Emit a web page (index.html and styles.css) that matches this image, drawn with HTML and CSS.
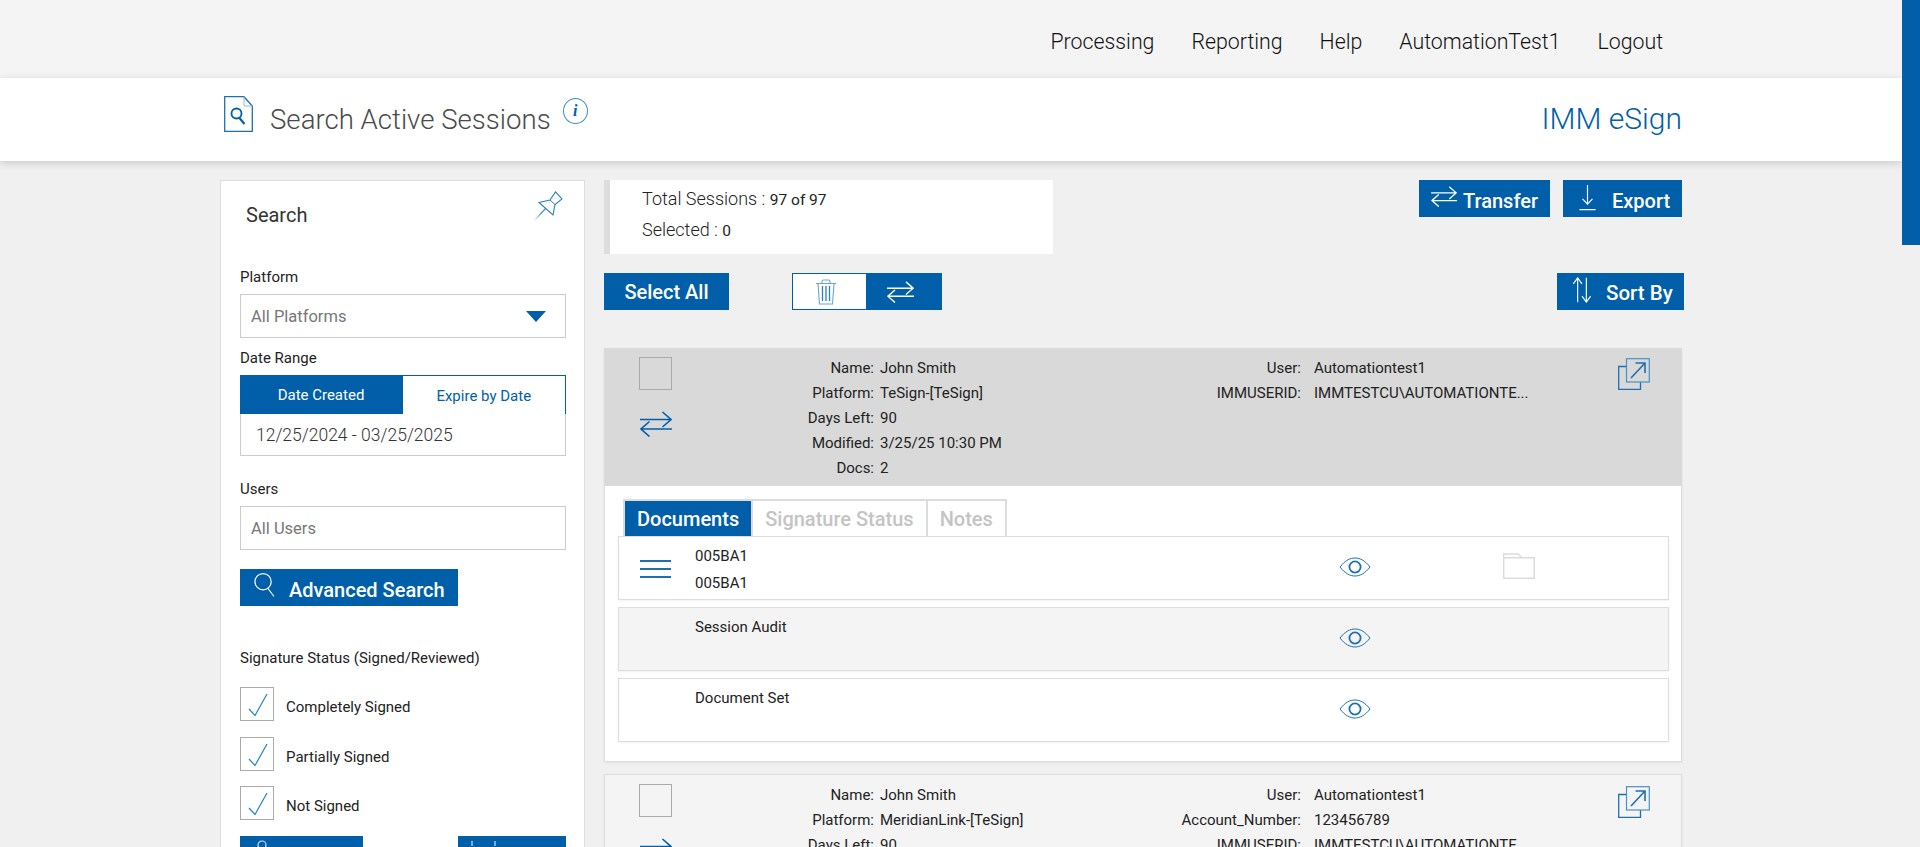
FILE: index.html
```html
<!DOCTYPE html>
<html lang="en">
<head>
<meta charset="utf-8">
<title>Search Active Sessions</title>
<link rel="stylesheet" href="styles.css">
</head>
<body>
<svg class="defs" width="0" height="0" aria-hidden="true">
  <defs>
    <symbol id="swap" viewBox="0 0 32 26">
      <path d="M0 8.5H31M22.5 1L31 8.5L22.5 16M32 18H1M9.5 10.5L1 18L9.5 25.5" fill="none" stroke="currentColor" stroke-width="1.6"/>
    </symbol>
    <symbol id="eye" viewBox="0 0 32 20">
      <path d="M1 10C6 3.5 11 1 16 1S26 3.5 31 10C26 16.5 21 19 16 19S6 16.5 1 10Z" fill="none" stroke="currentColor" stroke-width="1"/>
      <circle cx="16" cy="10" r="5.6" fill="none" stroke="currentColor" stroke-width="1.8"/>
    </symbol>
    <symbol id="ext" viewBox="0 0 32 32">
      <path d="M8.5 8.5H.7V31.3H22.5V24" fill="none" stroke="currentColor" stroke-width="1.3"/>
      <rect x="8.5" y=".7" width="22.8" height="23.3" fill="none" stroke="#4a90c4" stroke-width="1.2"/>
      <path d="M13 20L27 5M17.5 5H27V15" fill="none" stroke="currentColor" stroke-width="1.6"/>
    </symbol>
    <symbol id="check" viewBox="0 0 20 24">
      <path d="M1 16L7 22.5L19 1" fill="none" stroke="currentColor" stroke-width="1.2"/>
    </symbol>
  </defs>
</svg>
<div class="page">
  <nav class="topbar">
    <a class="nav-item">Processing</a>
    <a class="nav-item">Reporting</a>
    <a class="nav-item">Help</a>
    <a class="nav-item">AutomationTest1</a>
    <a class="nav-item">Logout</a>
  </nav>
  <header class="header">
    <svg class="file-icon" viewBox="0 0 29 36">
      <path d="M.7.7H20L28.3 10V35.3H.7Z" fill="#fff" stroke="#1f6fb0" stroke-width="1.3"/>
      <path d="M20 .7V10H28.3" fill="none" stroke="#9db9d2" stroke-width="1"/>
      <circle cx="12.5" cy="17.5" r="5" fill="none" stroke="#005fa8" stroke-width="1.8"/>
      <path d="M15.5 22L20.5 28" stroke="#005fa8" stroke-width="2.2"/>
    </svg>
    <h1 class="page-title">Search Active Sessions</h1>
    <span class="info-badge">i</span>
    <span class="brand">IMM eSign</span>
  </header>
  <div class="content">
    <aside class="sidebar">
      <div class="side-head">
        <h2 class="side-title">Search</h2>
        <svg class="pin" viewBox="0 0 30 31">
          <defs>
            <linearGradient id="pinfade" x1="0" y1="1" x2="1" y2="0">
              <stop offset="0" stop-color="#fff"/><stop offset=".6" stop-color="#4a90c4"/>
            </linearGradient>
          </defs>
          <path d="M1 30L13 17" stroke="url(#pinfade)" stroke-width="1.2"/>
          <path d="M6 11.5L17 9L22.5 1L29 8L22 13.5L20 24Z" fill="#fff" stroke="#2b7fbd" stroke-width="1.1"/>
          <path d="M17 9L22 13.5" stroke="#2b7fbd" stroke-width="1"/>
        </svg>
      </div>
      <label class="field-label first">Platform</label>
      <div class="field select-field">
        <span class="muted">All Platforms</span>
        <span class="caret"></span>
      </div>
      <label class="field-label date-label">Date Range</label>
      <div class="date-toggle">
        <span class="date-opt on">Date Created</span>
        <span class="date-opt">Expire by Date</span>
      </div>
      <div class="field date-field">12/25/2024 - 03/25/2025</div>
      <label class="field-label users-label">Users</label>
      <div class="field users-field"><span class="muted">All Users</span></div>
      <button class="btn adv-btn">
        <svg class="adv-icon" viewBox="0 0 22 26">
          <circle cx="9.5" cy="9.5" r="8.5" fill="none" stroke="#fff" stroke-width="1.3"/>
          <path d="M14.5 16.5L21 25" stroke="#fff" stroke-width="1.1"/>
        </svg>
        Advanced Search
      </button>
      <label class="field-label sig-label">Signature Status (Signed/Reviewed)</label>
      <div class="check-row">
        <span class="box"><svg class="tick"><use href="#check"/></svg></span><span class="check-text">Completely Signed</span>
      </div>
      <div class="check-row">
        <span class="box"><svg class="tick"><use href="#check"/></svg></span><span class="check-text">Partially Signed</span>
      </div>
      <div class="check-row">
        <span class="box"><svg class="tick"><use href="#check"/></svg></span><span class="check-text">Not Signed</span>
      </div>
      <div class="side-actions">
        <button class="btn side-btn left">
          <svg class="mini-a" viewBox="0 0 10 10"><circle cx="5" cy="5" r="4" fill="none" stroke="#cfe2f1" stroke-width="1.2"/></svg>
        </button>
        <button class="btn side-btn right">
          <svg class="mini-b" viewBox="0 0 30 6"><path d="M2 1V6M25 1V6" stroke="#cfe2f1" stroke-width="1.2"/></svg>
        </button>
      </div>
    </aside>
    <main class="results">
      <div class="summary-row">
        <div class="summary">
          <div class="sum-line">Total Sessions : <small>97 of 97</small></div>
          <div class="sum-line">Selected : <small>0</small></div>
        </div>
        <div class="summary-actions">
          <button class="btn transfer-btn"><svg class="swap-sm"><use href="#swap"/></svg>Transfer</button>
          <button class="btn export-btn">
            <svg class="export-icon" viewBox="0 0 18 30">
              <path d="M9 1V22M3.5 16.5L9 22.5L14.5 16.5M0 28.5H18" fill="none" stroke="#fff" stroke-width="1.3"/>
            </svg>Export
          </button>
        </div>
      </div>
      <div class="tool-row">
        <button class="btn select-all">Select All</button>
        <div class="bulk">
          <span class="bulk-del">
            <svg class="trash" viewBox="0 0 22 26">
              <path d="M1 4.5H21M7 4V2.5Q7 1 8.5 1H13.5Q15 1 15 2.5V4M3 5L4.5 25H17.5L19 5" fill="none" stroke="#6aa7d3" stroke-width="1.1"/>
              <path d="M7.5 7V22M11 7V22M14.5 7V22" stroke="#2d7fbb" stroke-width="1.3"/>
            </svg>
          </span>
          <span class="bulk-swap"><svg class="swap-md"><use href="#swap"/></svg></span>
        </div>
        <button class="btn sort-btn">
          <svg class="sort-icon" viewBox="0 0 22 30">
            <path d="M6 29V1M1 8L6 1L11 8M16 1V29M11 22L16 29L21 22" fill="none" stroke="#fff" stroke-width="1.3"/>
          </svg>Sort By
        </button>
      </div>

      <article class="card open">
        <div class="session-head selected">
          <div class="head-left">
            <span class="box sel-box"></span>
            <svg class="swap-blue"><use href="#swap"/></svg>
          </div>
          <dl class="info info-a">
            <dt>Name:</dt><dd>John Smith</dd>
            <dt>Platform:</dt><dd>TeSign-[TeSign]</dd>
            <dt>Days Left:</dt><dd>90</dd>
            <dt>Modified:</dt><dd>3/25/25 10:30 PM</dd>
            <dt>Docs:</dt><dd>2</dd>
          </dl>
          <dl class="info info-b">
            <dt>User:</dt><dd>Automationtest1</dd>
            <dt>IMMUSERID:</dt><dd class="clip">IMMTESTCU\AUTOMATIONTE...</dd>
          </dl>
          <svg class="ext-icon"><use href="#ext"/></svg>
        </div>
        <div class="card-body">
          <div class="tabs">
            <span class="tab active">Documents</span>
            <span class="tab">Signature Status</span>
            <span class="tab">Notes</span>
          </div>
          <div class="doc-row first-doc">
            <span class="burger"><i></i><i></i><i></i></span>
            <div class="doc-names"><p>005BA1</p><p>005BA1</p></div>
            <svg class="eye eye-a"><use href="#eye"/></svg>
            <svg class="folder" viewBox="0 0 32 26">
              <path d="M.7 25.3V1H15L19 4.7H31.3V25.3ZM.7 4.7H19" fill="#fff" stroke="#dcdcdc" stroke-width="1.4"/>
            </svg>
          </div>
          <div class="doc-row shaded">
            <div class="doc-names"><p>Session Audit</p></div>
            <svg class="eye"><use href="#eye"/></svg>
          </div>
          <div class="doc-row">
            <div class="doc-names"><p>Document Set</p></div>
            <svg class="eye"><use href="#eye"/></svg>
          </div>
        </div>
      </article>

      <article class="card closed">
        <div class="session-head">
          <div class="head-left">
            <span class="box sel-box"></span>
            <svg class="swap-blue"><use href="#swap"/></svg>
          </div>
          <dl class="info info-a">
            <dt>Name:</dt><dd>John Smith</dd>
            <dt>Platform:</dt><dd>MeridianLink-[TeSign]</dd>
            <dt>Days Left:</dt><dd>90</dd>
          </dl>
          <dl class="info info-b">
            <dt>User:</dt><dd>Automationtest1</dd>
            <dt>Account_Number:</dt><dd>123456789</dd>
            <dt>IMMUSERID:</dt><dd class="clip">IMMTESTCU\AUTOMATIONTE...</dd>
          </dl>
          <svg class="ext-icon"><use href="#ext"/></svg>
        </div>
      </article>
    </main>
  </div>
</div>
<div class="scroll-track"><div class="scroll-thumb"></div></div>
</body>
</html>
```
FILE: styles.css
```css
* { box-sizing: border-box; }
html, body { margin: 0; height: 100%; overflow: hidden; }
body {
  display: flex;
  background: #f0f0f0;
  color: #222;
  font-family: Roboto, "Liberation Sans", sans-serif;
  font-size: 15px;
}
.defs { position: absolute; }
.page { flex: 1; min-width: 0; height: 847px; overflow: hidden; }
.scroll-track { width: 18px; height: 847px; background: #f0f0f0; }
.scroll-thumb { height: 245px; background: #005fa8; }

.topbar {
  height: 78px;
  background: #f4f4f4;
  display: flex;
  justify-content: flex-end;
  align-items: center;
  gap: 37px;
  padding: 5px 239px 0 0;
}
.nav-item { font-size: 21.3px; font-weight: 300; color: #111; }

.header {
  position: relative;
  height: 83px;
  background: #fff;
  box-shadow: 0 2px 8px rgba(0,0,0,.16);
  display: flex;
  align-items: flex-start;
  padding: 18px 220px 0 224px;
}
.file-icon { width: 29px; height: 36px; flex: none; }
.page-title { margin: 8px 0 0 17px; font-size: 27.6px; line-height: 32px; font-weight: 300; color: #4a4a4a; }
.info-badge {
  width: 25px; height: 26px; margin: 2px 0 0 12px;
  border: 1px solid #3f8fc8; border-radius: 50%;
  color: #005fa8; font: italic bold 16px/24px "Liberation Serif", serif; text-align: center;
}
.brand { margin: 5px 0 0 auto; font-size: 30px; line-height: 36px; font-weight: 300; color: #005fa8; }

.content { display: flex; gap: 19px; padding: 19px 0 0 220px; }
.sidebar {
  width: 365px; height: 700px; flex: none;
  background: #fff; border: 1px solid #ddd;
  padding: 0 18px 0 19px;
}
.side-head { height: 77px; display: flex; justify-content: space-between; padding: 10px 3px 0 6px; }
.side-title { margin: 12px 0 0; font-size: 20px; line-height: 24px; font-weight: 400; color: #333; }
.pin { width: 30px; height: 31px; }
.field-label { display: block; font-size: 15px; line-height: 18px; color: #222; }
.first { margin-top: 10px; margin-bottom: 8px; }
.field { border: 1.5px solid #ccc; display: flex; align-items: center; }
.muted { color: #777; font-size: 16.5px; }
.select-field { height: 44px; justify-content: space-between; padding: 0 19px 0 10px; }
.caret { border-style: solid; border-width: 11px 10px 0; border-color: #005fa8 transparent transparent; }
.date-label { margin: 11px 0 8px; }
.date-toggle { display: flex; height: 39px; border: 1.5px solid #005fa8; border-bottom: 0; }
.date-opt { flex: 1; display: flex; align-items: center; justify-content: center; padding-top: 1px; font-size: 15px; color: #005fa8; }
.date-opt.on { flex: none; width: 163px; margin: -1.5px 0 0 -1.5px; background: #005fa8; color: #fff; }
.date-field { height: 42px; border-top: 0; padding-left: 15px; font-size: 17.5px; font-weight: 300; color: #333; }
.users-label { margin: 24px 0 8px; }
.users-field { height: 44px; padding-left: 10px; }

.btn { border: 0; background: #005fa8; color: #fff; font-family: inherit; font-size: 20px; font-weight: 500; padding: 0; display: flex; align-items: center; justify-content: center; }
.adv-btn { width: 218px; height: 37px; margin-top: 19px; justify-content: flex-start; padding: 5px 0 0 14px; }
.adv-icon { width: 21px; height: 26px; margin: -10px 14px 0 0; }
.sig-label { margin: 43px 0 20px; }
.check-row { display: flex; align-items: center; height: 34px; margin-bottom: 15.5px; font-size: 15px; color: #222; }
.check-text { margin-top: 6px; }
.box { display: block; flex: none; width: 34px; height: 34px; margin-right: 12px; border: 1.5px solid #aaa; background: transparent; }
.tick { display: block; width: 20px; height: 24px; margin: 5px 0 0 7px; color: #2584c6; }
.side-actions { display: flex; justify-content: space-between; margin-top: 12px; }
.side-btn { height: 37px; align-items: flex-start; justify-content: flex-start; }
.side-btn.left { width: 123px; }
.side-btn.right { width: 108px; }
.mini-a { width: 10px; height: 10px; margin: 4px 0 0 17px; }
.mini-b { width: 30px; height: 6px; margin: 4px 0 0 12px; }

.results { width: 1078px; flex: none; }
.summary-row { display: flex; justify-content: space-between; height: 74px; }
.summary { width: 449px; background: #fff; border-left: 6px solid #ddd; padding: 4px 0 0 32px; }
.sum-line { font-size: 18px; font-weight: 300; line-height: 30px; color: #222; }
.sum-line small { font-size: 15.5px; font-weight: 400; }
.summary-actions { display: flex; gap: 13px; align-items: flex-start; }
.transfer-btn { width: 131px; height: 37px; justify-content: flex-start; padding: 5px 0 0 12px; }
.export-btn { width: 119px; height: 37px; justify-content: flex-start; padding: 5px 0 0 15px; }
.swap-sm { width: 26px; height: 21px; margin: -9px 6px 0 0; color: #fff; }
.export-icon { width: 19px; height: 27px; margin: -8px 15px 0 0; }
.tool-row { display: flex; align-items: flex-start; margin-top: 19px; height: 75px; }
.select-all { width: 125px; height: 37px; }
.bulk { display: flex; height: 37px; margin-left: 63px; }
.bulk-del { width: 74px; background: #fff; border: 1.5px solid #005fa8; border-right: 0; display: flex; align-items: center; justify-content: center; padding-right: 8px; }
.trash { width: 22px; height: 26px; }
.bulk-swap { width: 76px; background: #005fa8; display: flex; align-items: center; justify-content: center; padding-right: 8px; }
.swap-md { width: 27px; height: 22px; color: #fff; }
.sort-btn { width: 127px; height: 37px; margin-left: auto; margin-right: -2px; justify-content: flex-start; padding: 3px 0 0 14px; font-size: 20.5px; }
.sort-icon { width: 22px; height: 26px; margin: -6px 13px 0 0; }

.card { background: #fff; border: 1px solid #ddd; border-top: 0; box-shadow: 0 1px 3px rgba(0,0,0,.06); }
.card.open { height: 414px; }
.card.closed { margin-top: 12px; background: #f4f4f4; border-top: 1px solid #ddd; }
.session-head { display: flex; height: 138px; padding-top: 7px; margin-left: -1px; margin-right: -1px; }
.session-head.selected { background: #d9d9d9; }
.closed .session-head { padding-top: 3px; height: 300px; }
.head-left { width: 150px; padding-left: 35px; flex: none; }
.sel-box { width: 33px; height: 33px; margin: 2px 0 0; }
.swap-blue { display: block; width: 32px; height: 26px; margin: 21px 0 0 1px; color: #005fa8; }
.closed .sel-box { margin-top: 6px; }
.info { margin: 0; display: grid; grid-auto-rows: 25px; align-items: center; }
.info dt { text-align: right; color: #222; }
.info dd { margin: 0; color: #222; white-space: nowrap; }
.info-a { width: 376px; flex: none; grid-template-columns: 120px 1fr; column-gap: 6px; align-content: start; }
.info-b { width: 399px; flex: none; grid-template-columns: 171px 1fr; column-gap: 13px; align-content: start; }
.closed .info { margin-top: 4px; }
.clip { width: 216px; overflow: hidden; text-overflow: clip; }
.ext-icon { width: 32px; height: 32px; margin: 3px 32px 0 auto; color: #1f6fb0; flex: none; }
.closed .ext-icon { margin-top: 8px; }

.card-body { padding: 13px 12px 0 13px; }
.tabs { display: inline-flex; height: 37px; margin-left: 5px; background: #ddd; padding: 2px 2px 0; gap: 2px; vertical-align: top; }
.tab { display: flex; align-items: center; padding: 0 12px; background: #fff; color: #c4c4c4; font-size: 20px; font-weight: 500; }
.tab.active { background: #005fa8; color: #fff; }
.doc-row { position: relative; display: flex; height: 64px; margin-bottom: 7px; border: 1px solid #ddd; background: #fff; box-shadow: 0 1px 2px rgba(0,0,0,.06); padding-left: 76px; }
.doc-row.shaded { background: #f4f4f4; }
.doc-names p { margin: 0; line-height: 27px; }
.first-doc .doc-names { padding-top: 6px; }
.doc-row:not(.first-doc) .doc-names { padding-top: 6px; }
.burger { position: absolute; left: 21px; top: 23px; width: 31px; display: grid; row-gap: 6.5px; }
.burger i { display: block; height: 1.5px; background: #1f6fb0; }
.eye { position: absolute; left: 720px; top: 20px; width: 32px; height: 20px; color: #1f6fb0; }
.folder { position: absolute; left: 884px; top: 16px; width: 32px; height: 26px; }
```
